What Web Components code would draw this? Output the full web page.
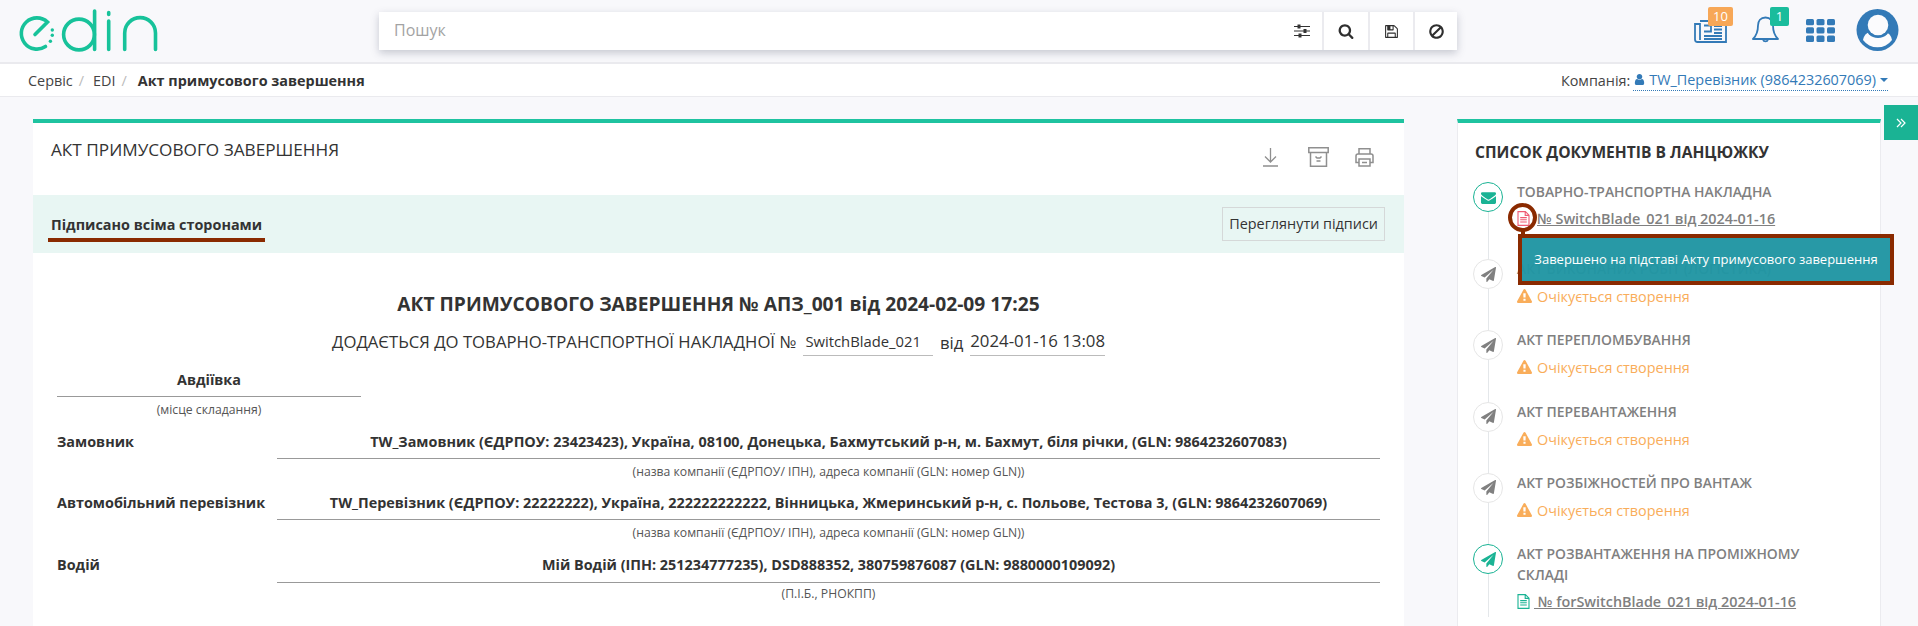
<!DOCTYPE html>
<html lang="uk">
<head>
<meta charset="utf-8">
<title>Акт примусового завершення</title>
<style>
  html, body { margin: 0; padding: 0; height: 100%; overflow: hidden; }
  body { background: #f8f8fb; font-family: "Open Sans", "Liberation Sans", sans-serif; color: #333; }
</style>
</head>
<body>
<app-header></app-header>
<crumb-bar></crumb-bar>
<act-page></act-page>

<script>
const PATHS = {
  envelope: 'M1792 710v794q0 66-47 113t-113 47h-1472q-66 0-113-47t-47-113v-794q44 49 101 87 362 246 497 345 57 42 92.5 65.5t94.5 48 110 24.5h2q51 0 110-24.5t94.5-48 92.5-65.5q170-123 498-345 57-39 100-87zm0-294q0 79-49 151t-122 123q-376 261-468 325-10 7-42.5 30.5t-54 38-52 32.5-57.5 27-50 9h-2q-23 0-50-9t-57.5-27-52-32.5-54-38-42.5-30.5q-91-64-262-182.5t-205-142.5q-62-42-117-115.5t-55-136.5q0-78 41.5-130t118.5-52h1472q65 0 112.5 47t47.5 113z',
  plane: 'M1764 11q33 24 27 64l-256 1536q-5 29-32 45-14 8-31 8-11 0-24-5l-453-185-242 295q-18 23-49 23-13 0-22-4-19-7-30.5-23.5t-11.5-36.5v-349l864-1059-1069 925-395-162q-37-14-40-55-2-40 32-59l1664-960q15-9 32-9 20 0 36 11z',
  warning: 'M1024 1375v-190q0-14-9.5-23.5t-22.5-9.5h-192q-13 0-22.5 9.5t-9.5 23.5v190q0 14 9.5 23.5t22.5 9.5h192q13 0 22.5-9.5t9.5-23.5zm-2-374l18-459q0-12-10-19-13-11-24-11h-220q-11 0-24 11-10 7-10 21l17 457q0 10 10 16.5t24 6.5h185q14 0 23.5-6.5t10.5-16.5zm-14-934l768 1408q35 63-2 126-17 29-46.5 46t-63.5 17h-1536q-34 0-63.5-17t-46.5-46q-37-63-2-126l768-1408q17-31 47-49t65-18 65 18 47 49z',
  user: 'M1536 1399q0 109-62.5 187t-150.5 78h-854q-88 0-150.5-78t-62.5-187q0-85 8.5-160.5t31.5-152 58.5-131 94-89 134.5-34.5q131 128 313 128t313-128q76 0 134.5 34.5t94 89 58.5 131 31.5 152 8.5 160.5zm-256-887q0 159-112.5 271.5t-271.5 112.5-271.5-112.5-112.5-271.5 112.5-271.5 271.5-112.5 271.5 112.5 112.5 271.5z',
  search: 'M1216 832q0-185-131.5-316.5t-316.5-131.5-316.5 131.5-131.5 316.5 131.5 316.5 316.5 131.5 316.5-131.5 131.5-316.5zm512 832q0 52-38 90t-90 38q-54 0-90-38l-343-342q-179 124-399 124-143 0-273.5-55.5t-225-150-150-225-55.5-273.5 55.5-273.5 150-225 225-150 273.5-55.5 273.5 55.5 225 150 150 225 55.5 273.5q0 220-124 399l343 343q37 37 37 90z',
  ban: 'M1440 893q0-161-87-295l-754 753q137 89 297 89 111 0 211.5-43.5t173.5-116.5 116-174.5 43-212.5zm-999 299l755-754q-135-91-300-91-148 0-273 73t-198 199-73 274q0 162 89 299zm1223-299q0 157-61 300t-163.5 246-245 164-298.5 61-298.5-61-245-164-163.5-246-61-300 61-299.5 163.5-245.5 245-164 298.5-61 298.5 61 245 164 163.5 245.5 61 299.5z',
  save: 'M512 1536h768v-384h-768v384zm896 0h128v-896q0-14-10-38.5t-20-34.5l-281-281q-10-10-34-20t-39-10v416q0 40-28 68t-68 28h-576q-40 0-68-28t-28-68v-416h-128v1280h128v-416q0-40 28-68t68-28h832q40 0 68 28t28 68v416zm-384-928v-320q0-13-9.5-22.5t-22.5-9.5h-192q-13 0-22.5 9.5t-9.5 22.5v320q0 13 9.5 22.5t22.5 9.5h192q13 0 22.5-9.5t9.5-22.5zm640 32v928q0 40-28 68t-68 28h-1344q-40 0-68-28t-28-68v-1344q0-40 28-68t68-28h928q40 0 88 20t76 48l280 280q28 28 48 76t20 88z'
};
const faIcon = (name, size, color) =>
  `<svg width="${size}" height="${size}" viewBox="0 0 1792 1792" fill="${color}" style="display:block"><path d="${PATHS[name]}"/></svg>`;
const fileIcon = (color) =>
  `<svg width="13" height="15" viewBox="0 0 13 15" fill="none" stroke="${color}" stroke-width="1.1" style="display:block"><path d="M1 .6h7.4l3.6 3.6v10.200H1zM8.200 .8v3.600h3.600M3.200 6.600h6.600M3.200 8.800h6.600M3.200 11h6.600"/></svg>`;

class AppHeader extends HTMLElement {
  constructor() {
    super();
    this.attachShadow({mode: 'open'}).innerHTML = `
      <style>
        :host { display: flex; align-items: center; height: 62px; border-bottom: 2px solid #eaeaee; position: relative; }
        .logo { margin-left: 19px; width: 140px; height: 46px; flex: none; }
        .search { margin-left: 220px; width: 1078px; height: 38px; background: #fff; display: flex; box-shadow: 0 3px 8px rgba(70,75,100,.28); flex: none; }
        .search .q { flex: 1; font-size: 16px; color: #a3a3a3; padding-left: 15px; line-height: 37px; }
        .btn { box-sizing: border-box; display: flex; align-items: center; justify-content: center; border-left: 2px solid #ebebef; }
        .tools { position: relative; flex: 1; height: 100%; }
        .tools > * { position: absolute; }
        .badge { color: #fff; font-size: 13px; line-height: 19px; height: 19px; text-align: center; border-radius: 2px; }
      </style>
      <svg class="logo" viewBox="19 7 140 46" fill="none" stroke="#17c29a" stroke-width="3.6" stroke-linecap="round">
        <path d="M35 33.500 47.500 21A15.600 15.600 0 1 0 45.500 45.500"/>
        <circle cx="52.300" cy="29" r="1.700" fill="#17c29a" stroke="none"/><circle cx="52.300" cy="34.300" r="1.700" fill="#17c29a" stroke="none"/><circle cx="50.400" cy="40.200" r="1.700" fill="#17c29a" stroke="none"/>
        <circle cx="79" cy="33.500" r="15.400"/><path d="M94.600 10v38.500M108.700 11.500v2M108.700 20v28.500M124.700 48.500V32a15.400 15.400 0 0 1 30.800 0v16.500"/>
      </svg>
      <div class="search">
        <div class="q">Пошук</div>
        <div class="btn" style="border:0;width:44px;padding-left:3px">
          <svg width="16" height="14" viewBox="0 0 16 14" fill="none" stroke="#333" stroke-width="1.2"><path d="M0 2.500h16M0 7h16M0 11.500h16"/><path d="M5 .5v4M11 5v4M6 9.500v4" stroke-width="3"/></svg>
        </div>
        <div class="btn" style="width:46px">${faIcon('search', 16, '#2f2f2f')}</div>
        <div class="btn" style="width:45px">${faIcon('save', 15, '#2f2f2f')}</div>
        <div class="btn" style="width:44px">${faIcon('ban', 17, '#2f2f2f')}</div>
      </div>
      <div class="tools">
        <svg style="left:237px;top:20px" width="33" height="23" viewBox="0 0 33 23" fill="none" stroke="#337ab7" stroke-width="1.8"><path d="M6 1h26v21H3.500Q1 22 1 19.500V4h5v16M10 5.500h7v6h-7M20 6h8M20 9.500h8M20 13h8M10 16h18M10 19h18"/></svg>
        <div class="badge" style="left:251px;top:7px;width:25px;background:#f7a757">10</div>
        <svg style="left:295px;top:15px" width="27" height="29" viewBox="0 0 27 29" fill="none" stroke="#337ab7" stroke-width="1.8" stroke-linejoin="round"><path d="M13.500 2.500c-5 0-7.500 3.500-7.500 8 0 6-1.500 10-5 13.500h25c-3.500-3.500-5-7.500-5-13.500 0-4.500-2.500-8-7.500-8zM11 24.500a2.600 2.600 0 0 0 5 0"/></svg>
        <div class="badge" style="left:313px;top:7px;width:19px;background:#1abc9c">1</div>
        <svg style="left:349px;top:19px" width="29" height="23" viewBox="0 0 29 23" fill="#337ab7"><rect width="8" height="6.300" rx="1.500"/><rect x="10.500" width="8" height="6.300" rx="1.500"/><rect x="21" width="8" height="6.300" rx="1.500"/><rect y="8.300" width="8" height="6.300" rx="1.500"/><rect x="10.500" y="8.300" width="8" height="6.300" rx="1.500"/><rect x="21" y="8.300" width="8" height="6.300" rx="1.500"/><rect y="16.600" width="8" height="6.300" rx="1.500"/><rect x="10.500" y="16.600" width="8" height="6.300" rx="1.500"/><rect x="21" y="16.600" width="8" height="6.300" rx="1.500"/></svg>
        <svg style="left:399px;top:9px" width="43" height="42" viewBox="0 0 43 42">
          <circle cx="21.500" cy="21" r="21" fill="#337ab7"/>
          <path d="M7 31q1-6.500 7-8h15q6 1.500 7 8a18 18 0 0 1-29 0z" fill="#fbfbfd"/>
          <circle cx="22" cy="16" r="13" fill="#337ab7"/>
          <circle cx="22" cy="16" r="10.300" fill="#fbfbfd"/>
        </svg>
      </div>`;
  }
}

class CrumbBar extends HTMLElement {
  constructor() {
    super();
    this.attachShadow({mode: 'open'}).innerHTML = `
      <style>
        :host { display: flex; align-items: center; height: 32px; background: #fff; border-bottom: 1px solid #eaeaee; padding: 0 30px 0 28px; font-size: 14.4px; color: #444; }
        i { font-style: normal; color: #bbb; margin: 0 9px 0 6px; }
        b { color: #333; margin-left: 2px; }
        .co { margin-left: auto; display: flex; align-items: center; gap: 3px; }
        .link { color: #337ab7; border-bottom: 1px dotted #337ab7; display: inline-flex; align-items: center; gap: 3px; height: 20px; }
        .caret { width: 0; height: 0; border: 4px solid transparent; border-top-color: #337ab7; border-bottom: 0; margin-left: 1px; }
      </style>
      <span>Сервіс</span><i>/</i><span>EDI</span><i>/</i><b>Акт примусового завершення</b>
      <div class="co">Компанія:
        <span class="link">${faIcon('user', 13, '#337ab7')}TW_Перевізник (9864232607069)<span class="caret"></span></span>
      </div>`;
  }
}

class ActPage extends HTMLElement {
  constructor() {
    super();
    this.attachShadow({mode: 'open'}).innerHTML = `
      <style>
        :host { display: flex; align-items: flex-start; padding: 22px 0 0 33px; position: relative; }
        .toggle { position: absolute; right: 0; top: 8px; width: 34px; height: 35px; background: #1ab394; display: flex; align-items: center; justify-content: center; }
      </style>
      <act-document></act-document>
      <chain-list></chain-list>
      <div class="toggle"><svg width="10" height="10" viewBox="0 0 10 10" fill="none" stroke="#fff" stroke-width="1.2"><path d="M1 1l4 4-4 4M5 1l4 4-4 4"/></svg></div>`;
  }
}

class ActDocument extends HTMLElement {
  constructor() {
    super();
    this.attachShadow({mode: 'open'}).innerHTML = `
      <style>
        :host { display: block; width: 1371px; height: 507px; overflow: hidden; flex: none; background: #fff; border-top: 4px solid #1fc3a0; box-sizing: border-box; font-size: 14.4px; color: #333; }
        .head { height: 72px; display: flex; padding: 16px 30px 0 18px; box-sizing: border-box; }
        h1 { flex: 1; margin: 0; font-size: 17.2px; font-weight: 400; line-height: 22px; }
        .acts { display: flex; gap: 26px; margin: 8px 0 0; }
        .acts svg:first-child { margin-right: 4px; }
        .status { height: 58px; background: #e8f6f3; display: flex; align-items: center; justify-content: space-between; padding: 0 19px 0 15px; }
        .status b { display: block; padding: 5px 3px 0 3px; height: 23px; line-height: 20px; border-bottom: 4px solid #8a2a00; margin-top: 4px; font-weight: 700; }
        .see { border: 1px solid #d5d8d8; height: 32px; line-height: 31px; padding: 0 6px; }
        .doc { padding: 37px 24px 0 24px; }
        h2 { margin: 0; font-size: 19.2px; font-weight: 700; line-height: 28px; text-align: center; }
        .sub { margin-top: 9px; display: flex; justify-content: center; align-items: flex-end; gap: 7px; font-size: 16.7px; height: 29px; }
        .sub span.u { border-bottom: 1px solid #bbb; font-size: 14.8px; padding: 0 12px 0 2px; line-height: 28px; }
        .sub span.d { font-size: 16.8px; padding: 0; }
        .sub > span:first-child { line-height: 28px; }
        .place { width: 304px; margin-top: 7px; text-align: center; }
        .place b { display: block; line-height: 34px; height: 33px; border-bottom: 1px solid #999; font-weight: 700; }
        small { display: block; font-size: 12.2px; line-height: 13px; color: #555; text-align: center; margin-top: 6px; }
        .rows { margin-top: 10px; }
      </style>
      <div class="head">
        <h1>АКТ ПРИМУСОВОГО ЗАВЕРШЕННЯ</h1>
        <div class="acts">
          <svg width="15" height="20" viewBox="0 0 15 20" fill="none" stroke="#8f8f8f" stroke-width="1.3"><path d="M7.500 1v14M2 9.500l5.500 5.500L13 9.500M0 19h15"/></svg>
          <svg width="21" height="20" viewBox="0 0 21 20" fill="none" stroke="#8f8f8f" stroke-width="1.5"><path d="M.8.8h19.400v4.700H.8zM2.500 5.500v13.700h16V5.500M7.500 9.500l1.500 1.500h3l1.500-1.500M8.500 14h4"/></svg>
          <svg width="19" height="20" viewBox="0 0 19 20" fill="none" stroke="#8f8f8f" stroke-width="1.5"><path d="M4 7V1.800h11V7M4 15.500H1V9q0-2 2-2h13q2 0 2 2v6.500h-3M4 12h11v7H4zM7 15.500h5"/></svg>
        </div>
      </div>
      <div class="status"><b>Підписано всіма сторонами</b><div class="see">Переглянути підписи</div></div>
      <div class="doc">
        <h2>АКТ ПРИМУСОВОГО ЗАВЕРШЕННЯ № АПЗ_001 від 2024-02-09 17:25</h2>
        <div class="sub"><span>ДОДАЄТЬСЯ ДО ТОВАРНО-ТРАНСПОРТНОЇ НАКЛАДНОЇ №</span><span class="u">SwitchBlade_021</span><span style="line-height:26px">від</span><span class="u d">2024-01-16 13:08</span></div>
        <div class="place"><b>Авдіївка</b><small>(місце складання)</small></div>
        <div class="rows">
          <doc-row label="Замовник" note="(назва компанії (ЄДРПОУ/ ІПН), адреса компанії (GLN: номер GLN))">TW_Замовник (ЄДРПОУ: 23423423), Україна, 08100, Донецька, Бахмутський р-н, м. Бахмут, біля річки, (GLN: 9864232607083)</doc-row>
          <doc-row label="Автомобільний перевізник" note="(назва компанії (ЄДРПОУ/ ІПН), адреса компанії (GLN: номер GLN))" style="height:62px">TW_Перевізник (ЄДРПОУ: 22222222), Україна, 222222222222, Вінницька, Жмеринський р-н, с. Польове, Тестова 3, (GLN: 9864232607069)</doc-row>
          <doc-row label="Водій" note="(П.І.Б., РНОКПП)" style="--note-gap:4px;--line-h:33px">Мій Водій (ІПН: 251234777235), DSD888352, 380759876087 (GLN: 9880000109092)</doc-row>
        </div>
      </div>`;
  }
}

class DocRow extends HTMLElement {
  constructor() {
    super();
    this.attachShadow({mode: 'open'}).innerHTML = `
      <style>
        :host { display: grid; grid-template-columns: 220px 1fr; height: 61px; font-size: 14.4px; font-weight: 700; }
        .v { text-align: center; border-bottom: 1px solid #999; height: var(--line-h, 32px); line-height: 32px; white-space: nowrap; }
        .l { line-height: 32px; white-space: nowrap; }
        small { display: block; font-size: 12.2px; font-weight: 400; line-height: 13px; color: #555; text-align: center; margin-top: var(--note-gap, 6px); }
      </style>
      <div class="l"></div>
      <div><div class="v"><slot></slot></div><small></small></div>`;
  }
  connectedCallback() {
    this.shadowRoot.querySelector('.l').textContent = this.getAttribute('label');
    this.shadowRoot.querySelector('small').textContent = this.getAttribute('note');
  }
}

class ChainList extends HTMLElement {
  constructor() {
    super();
    this.attachShadow({mode: 'open'}).innerHTML = `
      <style>
        :host { display: block; width: 424px; height: 507px; margin-left: 53px; flex: none; background: #fff; border-top: 4px solid #1fc3a0; border-left: 1px solid #ebebef; border-right: 1px solid #ebebef; box-sizing: border-box; padding: 17px 17px 0 15px; position: relative; }
        h3 { margin: 0 0 18px 2px; font-size: 15.6px; line-height: 24px; font-weight: 700; color: #333; }
        .tip { position: absolute; left: 60px; top: 111px; width: 376px; height: 51px; box-sizing: border-box; border: 4px solid #8a2a00; background: rgba(33,150,163,.97); color: #fff; font-size: 13px; line-height: 43px; text-align: center; z-index: 2; white-space: nowrap; }
      </style>
      <h3>СПИСОК ДОКУМЕНТІВ В ЛАНЦЮЖКУ</h3>
      <chain-item icon="envelope" done label="ТОВАРНО-ТРАНСПОРТНА НАКЛАДНА" link="№ SwitchBlade_021 від 2024-01-16" alert style="min-height:77px"></chain-item>
      <chain-item icon="plane" label="АКТ ВИКОНАНИХ РОБІТ (ЛОГІСТИКА)"></chain-item>
      <chain-item icon="plane" label="АКТ ПЕРЕПЛОМБУВАННЯ"></chain-item>
      <chain-item icon="plane" label="АКТ ПЕРЕВАНТАЖЕННЯ"></chain-item>
      <chain-item icon="plane" label="АКТ РОЗБІЖНОСТЕЙ ПРО ВАНТАЖ"></chain-item>
      <chain-item icon="plane" done label="АКТ РОЗВАНТАЖЕННЯ НА ПРОМІЖНОМУ СКЛАДІ" link="&nbsp;№ forSwitchBlade_021 від 2024-01-16"></chain-item>
      <div class="tip">Завершено на підставі Акту примусового завершення</div>`;
  }
}

class ChainItem extends HTMLElement {
  connectedCallback() {
    const done = this.hasAttribute('done');
    const link = this.getAttribute('link');
    const color = done ? '#1ab394' : '#808080';
    const isFirst = this.getAttribute('icon') === 'envelope';
    this.attachShadow({mode: 'open'}).innerHTML = `
      <style>
        :host { display: grid; grid-template-columns: 30px 1fr; column-gap: 14px; min-height: 71.3px; position: relative; }
        .rail { position: relative; }
        .rail::after { content: ""; position: absolute; left: 15px; top: 30px; bottom: -2px; width: 1px; background: #e4e7ea; }
        .dot { width: 30px; height: 30px; border-radius: 50%; box-sizing: border-box; border: 1px solid ${done ? '#1ab394' : '#e6e6e6'}; background: #fff; display: flex; align-items: center; justify-content: center; }
        .lbl { font-size: 13.9px; font-weight: 600; line-height: 21px; color: #808080; padding-right: 50px; margin-top: -1px; }
        .st { display: flex; align-items: center; gap: 5px; font-size: 14.4px; color: #f9ad5a; margin-top: 7px; line-height: 21px; }
        .doc { display: flex; align-items: center; font-size: 14.4px; font-weight: 600; color: #808080; line-height: 21px; margin-top: 6px; position: relative; }
        .doc u { margin-left: ${isFirst ? 7 : 4}px; }
        .ico { width: 13px; display: block; }
        .ring { position: absolute; left: -9px; top: -5px; width: 29px; height: 29px; box-sizing: border-box; border: 4px solid #8a2a00; border-radius: 50%; }
        .stem { position: absolute; left: 4px; top: 22px; width: 4px; height: 6px; background: #8a2a00; }
      </style>
      <div class="rail"><div class="dot">${faIcon(this.getAttribute('icon'), 15, color)}</div></div>
      <div>
        <div class="lbl">${this.getAttribute('label')}</div>
        ${link
          ? `<div class="doc">${this.hasAttribute('alert') ? '<span class="ring"></span><span class="stem"></span>' : ''}<span class="ico">${fileIcon(this.hasAttribute('alert') ? '#ef5a73' : '#1ab394')}</span><u>${link}</u></div>`
          : `<div class="st">${faIcon('warning', 15, '#f9ad5a')}Очікується створення</div>`}
      </div>`;
  }
}

customElements.define('app-header', AppHeader);
customElements.define('crumb-bar', CrumbBar);
customElements.define('act-page', ActPage);
customElements.define('act-document', ActDocument);
customElements.define('doc-row', DocRow);
customElements.define('chain-list', ChainList);
customElements.define('chain-item', ChainItem);
</script>
</body>
</html>
